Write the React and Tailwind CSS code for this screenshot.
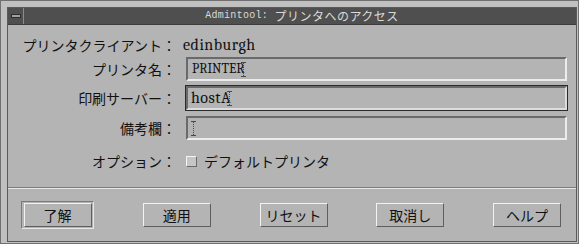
import React from "react";

const JP = "font-[Noto_Sans_CJK_JP,Noto_Sans_CJK_SC,sans-serif]";
const SERIF = "font-serif";
const MONO = "font-mono";

function IBeam({ className = "" }) {
  return (
    <svg width="5" height="15" viewBox="0 0 5 15" className={className}>
      <path d="M0 0.5h5M0 14.5h5" stroke="#4a4a4a" strokeWidth="1" />
      <path d="M2.5 1v13" stroke="#4a4a4a" strokeWidth="1" strokeDasharray="1 1" />
    </svg>
  );
}

function Btn({ children }) {
  return (
    <div
      className={`w-[68px] h-[24px] flex items-center justify-center bg-[#b4b4b4] border-t border-l border-t-[#f2f2f2] border-l-[#f2f2f2] border-r border-b border-r-[#5e5e5e] border-b-[#5e5e5e] text-[14px] text-[#111] ${JP}`}
    >
      {children}
    </div>
  );
}

function Label({ children }) {
  return (
    <div className={`w-[168px] shrink-0 text-right text-[14px] leading-none text-[#111] ${JP}`}>
      {children}
    </div>
  );
}

export default function App() {
  return (
    <div className="w-[585px] h-[250px] bg-white overflow-hidden">
      <div className="w-[579px] h-[244px] bg-[#c0c0c0] border border-[#707070] pl-[6px] pt-[6px] pr-px pb-px flex">
        <div className="flex-1 flex flex-col border border-[#5a5a5a]">
          {/* title bar */}
          <div className="h-[17px] shrink-0 flex bg-[#4f4f4f] border-b border-[#3c3c3c]">
            <div className="w-[16px] h-full flex items-center justify-center border-r border-[#8c8c8c]">
              <div className="w-[10px] h-[4px] bg-[#a0a0a0] border border-[#2e2e2e]" />
            </div>
            <div className="flex-1 flex items-center justify-center text-[#dadada] leading-none pl-[4px]">
              <span className={`${MONO} text-[10px] tracking-[0.3px]`}>Admintool:&nbsp;</span>
              <span className={`text-[12px] tracking-[0.5px] ${JP}`}>プリンタへのアクセス</span>
            </div>
          </div>

          {/* content */}
          <div className="flex-1 bg-[#b4b4b4] flex flex-col pt-[10px]">
            {/* client row */}
            <div className="h-[20px] flex items-center pr-[9px]">
              <Label>プリンタクライアント：</Label>
              <div className={`ml-[7px] text-[16px] tracking-[0.5px] leading-none text-[#111] ${SERIF}`}>edinburgh</div>
            </div>

            {/* printer name */}
            <div className="mt-[2px] h-[24px] flex items-center pr-[9px]">
              <Label>プリンタ名：</Label>
              <div className="ml-[10px] flex-1 h-full flex items-center pl-[4px] border-2 border-t-[#6a6a6a] border-l-[#6a6a6a] border-r-[#ececec] border-b-[#ececec]">
                <span className={`text-[13.5px] leading-none text-[#111] ${SERIF}`}>PRINTER</span>
                <IBeam className="-ml-[4px]" />
              </div>
            </div>

            {/* print server (focused) */}
            <div className="mt-[4px] h-[26px] flex items-center pr-[8px]">
              <Label>印刷サーバー：</Label>
              <div className="ml-[9px] flex-1 h-full border border-[#2a2a2a]">
                <div className="w-full h-full flex items-center pl-[3px] border-2 border-t-[#6a6a6a] border-l-[#6a6a6a] border-r-[#dcdcdc] border-b-[#dcdcdc]">
                  <span className={`text-[16px] tracking-[0.5px] leading-none text-[#111] ${SERIF}`}>hostA</span>
                  <IBeam className="-ml-[4px]" />
                </div>
              </div>
            </div>

            {/* notes */}
            <div className="mt-[5px] h-[24px] flex items-center pr-[9px]">
              <Label>備考欄：</Label>
              <div className="ml-[10px] flex-1 h-full flex items-center pl-[3px] border-2 border-t-[#6a6a6a] border-l-[#6a6a6a] border-r-[#ececec] border-b-[#ececec]">
                <IBeam />
              </div>
            </div>

            {/* option */}
            <div className="mt-[11px] h-[20px] flex items-center pr-[9px]">
              <Label>オプション：</Label>
              <div className="ml-[10px] w-[11px] h-[11px] bg-[#c6c6c6] border-t border-l border-t-[#f4f4f4] border-l-[#f4f4f4] border-r border-b border-r-[#6a6a6a] border-b-[#6a6a6a]" />
              <div className={`ml-[7px] text-[14px] leading-none text-[#111] ${JP}`}>デフォルトプリンタ</div>
            </div>

            {/* separator */}
            <div className="mt-[16px] h-[2px] border-t border-t-[#7c7c7c] border-b border-b-[#e8e8e8]" />

            {/* buttons */}
            <div className="mt-[12px] h-[28px] flex items-center justify-between pl-[13px] pr-[15px]">
              <div className="w-[73px] h-[28px] flex items-center justify-center border border-t-[#7a7a7a] border-l-[#7a7a7a] border-r-[#e6e6e6] border-b-[#e6e6e6]">
                <Btn>了解</Btn>
              </div>
              <Btn>適用</Btn>
              <Btn>リセット</Btn>
              <Btn>取消し</Btn>
              <Btn>ヘルプ</Btn>
            </div>
          </div>
        </div>
      </div>
    </div>
  );
}
